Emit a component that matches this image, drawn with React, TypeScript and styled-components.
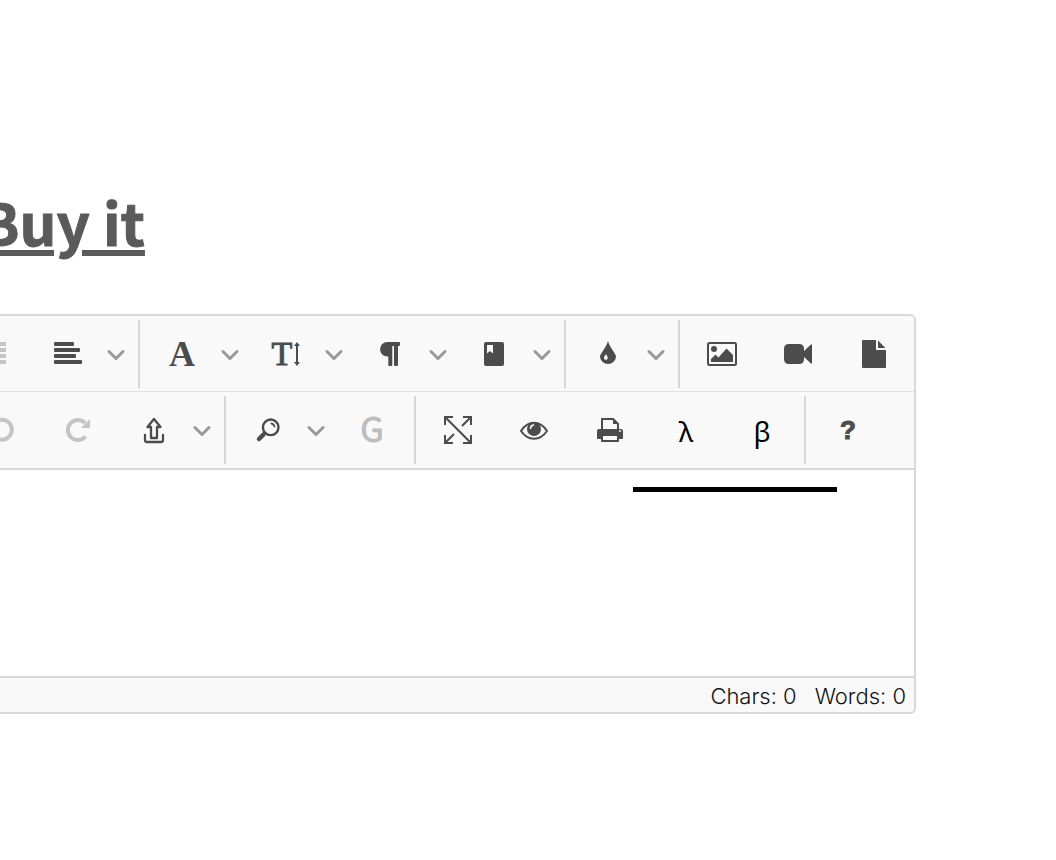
import React from "react";
import styled, { createGlobalStyle } from "styled-components";

const GlobalStyle = createGlobalStyle`
  * { box-sizing: border-box; }
  body { margin: 0; background: #fff; font-family: Inter, sans-serif; overflow-x: hidden; }
`;

const Page = styled.main`
  overflow: hidden;
  padding: 188px 140px 146px 0;
`;

const Title = styled.h1`
  margin: 0 0 60px -20px;
  font: 700 58px/66px "Noto Sans CJK SC", sans-serif;
  color: #5a5a5a;
  -webkit-text-stroke: 1px currentColor;
`;

const TitleLink = styled.a`
  color: inherit;
  text-decoration: underline;
  text-decoration-thickness: 6px;
  text-underline-offset: 4px;
`;

const Editor = styled.section`
  margin-left: -50px;
  border: 2px solid #d8d8d8;
  border-left: 0;
  border-radius: 6px;
  overflow: hidden;
`;

const Toolbar = styled.div`
  background: #f9f9f9;
  border-bottom: 2px solid #d8d8d8;
`;

const ToolRow = styled.div<{ $first?: boolean }>`
  display: flex;
  align-items: flex-start;
  height: 76px;
  padding: 4px 0 0 ${(p) => (p.$first ? 0 : 10)}px;
  border-bottom: ${(p) => (p.$first ? "1px solid #e0e0e0" : "0")};
`;

const Group = styled.div`
  display: flex;
  gap: 8px;
  padding: 0 8px;
  & + & { border-left: 2px solid #d8d8d8; }
`;

const Split = styled.div`
  display: flex;
`;

const ToolButton = styled.button`
  display: flex;
  align-items: center;
  justify-content: center;
  width: 68px;
  height: 68px;
  padding: 0;
  border: 0;
  background: none;
  color: #4c4c4c;
  &:disabled { color: #c4c4c4; }
`;

const Trigger = styled(ToolButton)`
  width: 28px;
  color: #999;
`;

const SerifGlyph = styled.span<{ $light?: boolean }>`
  font: ${(p) => (p.$light ? "400 34px" : "700 36px")}/36px "Liberation Serif", serif;
  -webkit-text-stroke: ${(p) => (p.$light ? "1px currentColor" : "0")};
`;

const SansGlyph = styled.span`
  padding-bottom: 4px;
  font: 400 34px/34px "Noto Sans CJK SC", sans-serif;
  color: #bdbdbd;
  -webkit-text-stroke: 1px currentColor;
`;

const HelpGlyph = styled.span`
  font: 700 26px/28px "Liberation Sans", sans-serif;
  -webkit-text-stroke: 1px currentColor;
`;

const GreekGlyph = styled.span`
  padding-top: 2px;
  font: 400 28px/28px "Noto Sans", sans-serif;
  color: #000;
`;

const SizeGlyph = styled.span`
  display: flex;
  align-items: center;
  gap: 2px;
`;

const Content = styled.div`
  display: flex;
  justify-content: flex-end;
  height: 206px;
  padding: 17px 77px;
`;

const Marker = styled.div`
  width: 204px;
  height: 5px;
  background: #000;
`;

const StatusBar = styled.footer`
  display: flex;
  justify-content: flex-end;
  gap: 18px;
  padding: 4px 8px 2px 0;
  border-top: 2px solid #d8d8d8;
  background: #f9f9f9;
  color: #111;
  font: 300 22px/28px Inter, sans-serif;
`;

const icons = {
  indent: <path d="M2 4h28v4H2zM14 10h16v4H14zM14 16h16v4H14zM2 22h28v4H2z" />,
  align: (
    <>
      <rect x="2" y="4" width="20" height="4" rx="1" />
      <rect x="2" y="10" width="26" height="4" rx="1" />
      <rect x="2" y="16" width="22" height="4" rx="1" />
      <rect x="2" y="22" width="28" height="4" rx="1" />
    </>
  ),
  paragraph: <path d="M13.300 4H25q1 0 1 1v2q0 1-1 1h-1v19q0 1-1 1h-2q-1 0-1-1V8h-1.700v19q0 1-1 1h-2q-1 0-1-1v-8.500h-1A7.250 7.250 0 0 1 13.300 4z" />,
  book: <path fillRule="evenodd" d="M8 4h16q2 0 2 2v20q0 2-2 2H8q-2 0-2-2V6q0-2 2-2zM9 7v8.500l3-2.500 3 2.500V7z" />,
  drop: <path fillRule="evenodd" d="M16 3c1 4 3 6.500 5.500 10.500C23 16 24 17 24 18.500A8 7.500 0 0 1 8 18.500C8 17 9 16 10.500 13.500 13 9.500 15 7 16 3zM14 16c-.5 1.500-2 2-2 4a1.800 1.800 0 0 0 3.700 0c0-2-1.200-2.500-1.700-4z" />,
  image: (
    <>
      <rect x="2" y="5" width="28" height="22" rx="1.500" fill="none" stroke="currentColor" strokeWidth="2" />
      <circle cx="8" cy="11" r="3" />
      <path d="M5 24v-3l4.500-4.500 3 3L20.500 10.500 27 17v7z" />
    </>
  ),
  video: <path d="M7 6h10q5 0 5 5v2l7-6.500q1-.8 1 .5v18q0 1.300-1 .5L22 19v2q0 5-5 5H7q-5 0-5-5V11q0-5 5-5z" />,
  file: <path d="M5 2h13v10h10v17q0 1-1 1H5q-1 0-1-1V3q0-1 1-1zM20 2.500 27.500 10H20z" />,
  undo: (
    <>
      <path fill="none" stroke="currentColor" strokeWidth="4" d="M8.500 9A10 10 0 1 1 9 23" />
      <path d="M4 5v9h9z" />
    </>
  ),
  redo: (
    <>
      <path fill="none" stroke="currentColor" strokeWidth="4" d="M23 9A10 10 0 1 0 23.500 22.500" />
      <path d="M28 5v9h-9z" />
    </>
  ),
  upload: (
    <g fill="none" stroke="currentColor" strokeWidth="2.300" strokeLinejoin="round" strokeLinecap="round">
      <path d="M16 5l-6.500 8H13V24h6V13h3.500z" />
      <path d="M7 21v5q0 2 2 2h14q2 0 2-2V21" />
    </g>
  ),
  search: (
    <g fill="none" stroke="currentColor" strokeLinecap="round">
      <circle cx="18.700" cy="13.300" r="7.800" strokeWidth="2.400" />
      <path strokeWidth="4.500" d="M11.500 20.500 7 25" />
      <path strokeWidth="1.800" d="M19.500 9.500a4 4 0 0 1 3 3" />
    </g>
  ),
  expand: (
    <path fill="none" stroke="currentColor" strokeWidth="2" d="M3 11V3h8M21 3h8v8M29 21v8h-8M11 29H3v-8M3 3l26 26M29 3l-9 9M12 20l-9 9" />
  ),
  eye: (
    <>
      <path fill="none" stroke="currentColor" strokeWidth="2" d="M3 17C10 6 22 6 29 17 22 27.300 10 27.300 3 17z" />
      <circle cx="16" cy="15" r="7" />
      <path fill="none" stroke="#f9f9f9" strokeWidth="1.500" strokeLinecap="round" d="M12.500 14.500q0-3 3-3.500" />
    </>
  ),
  print: (
    <>
      <path d="M5 15h22q2 0 2 2v7q0 1-1 1h-3v-3H7v3H4q-1 0-1-1v-7q0-2 2-2z" />
      <path fill="none" stroke="currentColor" strokeWidth="2" strokeLinejoin="round" d="M8 16V5h11l5 5v6M8 21v6h16v-6z" />
      <path d="M19 4v6h6z" />
      <circle cx="26" cy="17" r="1" fill="#f9f9f9" />
    </>
  ),
};

type IconName = keyof typeof icons;

const Icon = ({ name }: { name: IconName }) => (
  <svg width="32" height="32" viewBox="0 0 32 32" fill="currentColor" aria-hidden="true">
    {icons[name]}
  </svg>
);

const TextSizeIcon = () => (
  <SizeGlyph>
    <SerifGlyph $light>T</SerifGlyph>
    <svg width="6" height="24" viewBox="0 0 6 24" fill="currentColor" aria-hidden="true">
      <path d="M3 0l3 4H4v16h2l-3 4-3-4h2V4H0z" />
    </svg>
  </SizeGlyph>
);

type ToolProps = { label: string; menu?: boolean; disabled?: boolean; children: React.ReactNode };

const Tool = ({ label, menu, disabled, children }: ToolProps) => (
  <Split>
    <ToolButton type="button" aria-label={label} disabled={disabled}>{children}</ToolButton>
    {menu && (
      <Trigger type="button" aria-label={`${label} options`}>
        <svg width="20" height="12" viewBox="0 0 20 12" fill="none" stroke="currentColor" strokeWidth="3" strokeLinecap="round" aria-hidden="true">
          <path d="M3 3.500 10 10.500 17 3.500" />
        </svg>
      </Trigger>
    )}
  </Split>
);

export default function App() {
  return (
    <>
      <GlobalStyle />
      <Page>
        <Title><TitleLink href="#buy">Buy it</TitleLink></Title>
        <Editor>
          <Toolbar role="toolbar" aria-label="Formatting">
            <ToolRow $first>
              <Group>
                <Tool label="Indent" disabled><Icon name="indent" /></Tool>
                <Tool label="Align" menu><Icon name="align" /></Tool>
              </Group>
              <Group>
                <Tool label="Font" menu><SerifGlyph>A</SerifGlyph></Tool>
                <Tool label="Font size" menu><TextSizeIcon /></Tool>
                <Tool label="Paragraph" menu><Icon name="paragraph" /></Tool>
                <Tool label="Class" menu><Icon name="book" /></Tool>
              </Group>
              <Group>
                <Tool label="Colour" menu><Icon name="drop" /></Tool>
              </Group>
              <Group>
                <Tool label="Image"><Icon name="image" /></Tool>
                <Tool label="Video"><Icon name="video" /></Tool>
                <Tool label="File"><Icon name="file" /></Tool>
              </Group>
            </ToolRow>
            <ToolRow>
              <Group>
                <Tool label="Undo" disabled><Icon name="undo" /></Tool>
                <Tool label="Redo" disabled><Icon name="redo" /></Tool>
                <Tool label="Export" menu><Icon name="upload" /></Tool>
              </Group>
              <Group>
                <Tool label="Find" menu><Icon name="search" /></Tool>
                <Tool label="Search the web" disabled><SansGlyph>G</SansGlyph></Tool>
              </Group>
              <Group>
                <Tool label="Full screen"><Icon name="expand" /></Tool>
                <Tool label="Preview"><Icon name="eye" /></Tool>
                <Tool label="Print"><Icon name="print" /></Tool>
                <Tool label="Lambda"><GreekGlyph>λ</GreekGlyph></Tool>
                <Tool label="Beta"><GreekGlyph>β</GreekGlyph></Tool>
              </Group>
              <Group>
                <Tool label="Help"><HelpGlyph>?</HelpGlyph></Tool>
              </Group>
            </ToolRow>
          </Toolbar>
          <Content>
            <Marker />
          </Content>
          <StatusBar>
            <span>Chars: 0</span>
            <span>Words: 0</span>
          </StatusBar>
        </Editor>
      </Page>
    </>
  );
}
